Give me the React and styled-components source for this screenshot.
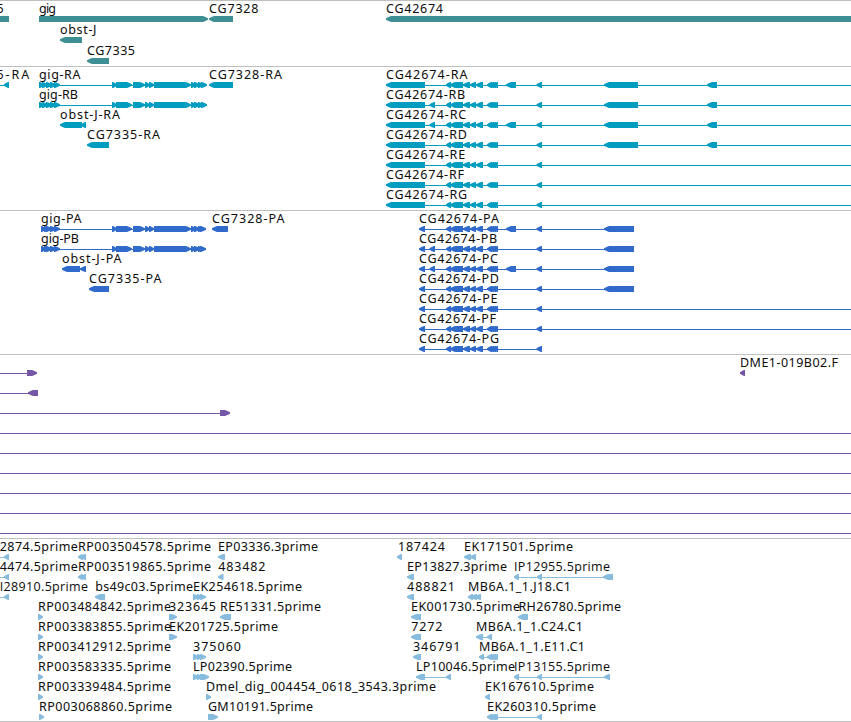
import styled, { createGlobalStyle } from "styled-components";

const WIDTH = 851;
const HEAD = 5;

// label: [text, left, right], feature: [start, end, direction], line: [from, to]
const gigExons = (start, end) => [
  [start, start + 5, 1],
  [start + 3, start + 9, 1],
  [46, 52, 1],
  [50, 56, 1],
  [54, 60, 1],
  [112, 117, 1],
  [116, 132, 1],
  [133, 145, 1],
  [145, 150, 1],
  [149, 154, 1],
  [154, 191, 1],
  [191, 196, 1],
  [194, 200, 1],
  [198, 204, 1],
  [end - 6, end, 1],
];

const cgExons = [
  [446, 451, -1],
  [450, 463, -1],
  [463, 470, -1],
  [470, 476, -1],
  [476, 483, -1],
  [487, 492, -1],
  [489, 494, -1],
  [491, 496, -1],
  [493, 498, -1],
  [536.5, 542, -1],
];

const extraExons = {
  A: [[506, 516, -1]],
  B: [[429.5, 435, -1]],
  C: [[429.5, 435, -1], [506, 516, -1]],
};

const cgTranscript = (id, right) => ({
  label: [`CG42674-R${id}`, 386.5, right],
  line: [386, WIDTH],
  features: [
    [386, 425, -1],
    ...cgExons,
    ...(extraExons[id] || []),
    ...("ABCD".includes(id) ? [[604, 638, -1], [707, 717, -1]] : []),
  ],
});

const cgProtein = (id, right, lineEnd) => ({
  label: [`CG42674-P${id}`, 419.5, right],
  line: [419, lineEnd],
  features: [
    [419, 425, -1],
    ...cgExons,
    ...(extraExons[id] || []),
    ...("ABCD".includes(id) ? [[604, 634, -1]] : []),
  ],
});

const item = (text, left, right, features = [], line) => ({
  label: [text, left, right],
  features,
  line,
});

const genes = [
  [
    item("5", -3, 3.2, [[-20, 9, 0]]),
    item("gig", 39.5, 55.5, [[39, 208, 1]]),
    item("CG7328", 209.5, 258, [[209, 233, -1]]),
    item("CG42674", 386.5, 442.5, [[386, 860, -1]]),
  ],
  [item("obst-J", 60.5, 96, [[60, 82, -1]])],
  [item("CG7335", 87.5, 134.5, [[87, 109, -1]])],
];

const transcripts = [
  [
    item("5-RA", -3, 28.8, [[4, 9, -1]], [0, 9]),
    item("gig-RA", 39.5, 80, gigExons(39, 207), [39, 207]),
    item("CG7328-RA", 209.5, 281.5, [[209, 233, -1]]),
    cgTranscript("A", 467),
  ],
  [
    item("gig-RB", 39.5, 77.5, gigExons(39, 207), [39, 207]),
    cgTranscript("B", 464.7),
  ],
  [
    item("obst-J-RA", 60.5, 119.5, [[60, 82, -1], [81, 86, -1]]),
    cgTranscript("C", 465.7),
  ],
  [
    item("CG7335-RA", 87.5, 159.5, [[87, 109, -1]]),
    cgTranscript("D", 466.5),
  ],
  [cgTranscript("E", 464.7)],
  [cgTranscript("F", 463.5)],
  [cgTranscript("G", 466.7)],
];

const proteins = [
  [
    item("gig-PA", 41.5, 81, gigExons(41, 206), [41, 206]),
    item("CG7328-PA", 212.5, 284, [[212, 228, -1]]),
    cgProtein("A", 498.5, 634),
  ],
  [
    item("gig-PB", 41.5, 78.5, gigExons(41, 206), [41, 206]),
    cgProtein("B", 496.7, 634),
  ],
  [
    item("obst-J-PA", 62.5, 121, [[62, 80, -1], [80, 86, -1]], [62, 86]),
    cgProtein("C", 497.5, 634),
  ],
  [
    item("CG7335-PA", 89.5, 161, [[89, 109, -1]]),
    cgProtein("D", 498.5, 634),
  ],
  [cgProtein("E", 497, WIDTH)],
  [cgProtein("F", 495.5, WIDTH)],
  [cgProtein("G", 498.5, 542)],
];

const fullLine = [{ features: [], line: [0, WIDTH] }];

const clones = [
  [
    { features: [[27, 37, 1]], line: [0, 30] },
    item("DME1-019B02.F", 740.5, 837.5, [[740, 745, -1]]),
  ],
  [{ features: [[28, 38, -1]], line: [0, 30] }],
  [{ features: [[220, 230, 1]], line: [0, 222] }],
  fullLine,
  fullLine,
  fullLine,
  fullLine,
  fullLine,
  fullLine,
];

const insertions = [
  [
    item("2874.5prime", 0.3, 77.3, [[4, 9, -1]], [0, 9]),
    item("RP003504578.5prime", 78.5, 210.5, [[78, 83, -1], [81, 86, -1]]),
    item("EP03336.3prime", 218.5, 317.5, [[218, 225, -1]]),
    item("187424", 398.5, 444.3, [[397, 402, -1]]),
    item("EK171501.5prime", 464.5, 572.5, [[464, 471, -1], [470, 476, -1]]),
  ],
  [
    item("4474.5prime", 0.3, 77.3, [[4, 9, -1]], [0, 9]),
    item("RP003519865.5prime", 78.5, 210.5, [[78, 83, -1], [81, 86, -1]]),
    item("483482", 218.7, 265, [[218, 223.5, -1]]),
    item("EP13827.3prime", 407.5, 506.5, [[407, 414, -1]]),
    item(
      "IP12955.5prime",
      514.5,
      609.5,
      [[514, 519, -1], [537, 542, -1], [603, 613, -1]],
      [514, 613]
    ),
  ],
  [
    item("I28910.5prime", 0.2, 87.5, [[4, 9, -1]], [0, 9]),
    item("bs49c03.5prime", 95.7, 192.5, [[95, 105, -1]]),
    item("EK254618.5prime", 193.5, 301.5, [[193, 199, 1], [197, 202, 1], [200, 206, 1]]),
    item("488821", 407.5, 454.5, [[407, 414, -1]]),
    item("MB6A.1_1.J18.C1", 468.5, 570.5, [[468, 473, -1], [471, 477, -1], [475, 481, -1]]),
  ],
  [
    item("RP003484842.5prime", 38.5, 170.5, [[38, 43, 1]]),
    item("323645", 169.5, 215.5, [[169, 177, 1]]),
    item("RE51331.5prime", 220.5, 320.5, [[220, 231, -1]]),
    item("EK001730.5prime", 411.5, 519.5, [[411, 421, -1]]),
    item("RH26780.5prime", 519, 620.5, [[518, 528, -1]]),
  ],
  [
    item("RP003383855.5prime", 38.5, 170.5, [[38, 43, 1]]),
    item("EK201725.5prime", 169.5, 277.5, [[169, 177, 1]]),
    item("7272", 411.8, 441.8, [[411, 421, -1]]),
    item("MB6A.1_1.C24.C1", 476.5, 582.5, [[476, 483, -1], [487, 492, -1]], [476, 492]),
  ],
  [
    item("RP003412912.5prime", 38.5, 170.5, [[38, 43, 1]]),
    item("375060", 193.5, 240.5, [[193, 199, 1], [197, 202, 1], [200, 206, 1]]),
    item("346791", 413.5, 460, [[413, 421, -1]]),
    item(
      "MB6A.1_1.E11.C1",
      479.5,
      584.5,
      [[479, 484, -1], [487, 492, -1], [489, 494, -1], [491, 496, -1], [493, 498, -1]],
      [479, 498]
    ),
  ],
  [
    item("RP003583335.5prime", 38.5, 170.5, [[38, 43, 1]]),
    item("LP02390.5prime", 193.5, 291.5, [[193, 199, 1], [197, 202, 1], [200, 209, 1]]),
    item("LP10046.5prime", 416.5, 514.5, [[416, 425, -1], [446, 451, -1]], [416, 451]),
    item(
      "IP13155.5prime",
      514.5,
      609.5,
      [[514, 519, -1], [537, 542, -1], [604, 610, -1]],
      [514, 610]
    ),
  ],
  [
    item("RP003339484.5prime", 38.5, 170.5, [[38, 43, 1]]),
    item("Dmel_dig_004454_0618_3543.3prime", 206.5, 435.5, [[206, 211, 1]]),
    item("EK167610.5prime", 485.5, 593.5, [[485, 490, -1]]),
  ],
  [
    item("RP003068860.5prime", 39.5, 171.5, [[39, 44, 1]]),
    item("GM10191.5prime", 208.5, 312.5, [[208, 218, 1]]),
    item(
      "EK260310.5prime",
      487.5,
      595.5,
      [[487, 492, -1], [489, 494, -1], [491, 496, -1], [493, 498, -1], [537, 542, -1]],
      [487, 542]
    ),
  ],
];

const tracks = [
  { name: "genes", color: "#3d8f93", rowHeight: 21, gap: 2, rows: genes },
  { name: "transcripts", color: "#009dc0", rowHeight: 20, gap: 3, rows: transcripts },
  { name: "proteins", color: "#306bcb", rowHeight: 20, gap: 3, rows: proteins },
  { name: "clones", color: "#7457a7", rowHeight: 20, gap: 3, rows: clones },
  { name: "insertions", color: "#87bcde", rowHeight: 20, gap: 2, rows: insertions },
];

const featurePoints = ([start, end, dir]) => {
  if (dir === 0) {
    return `${start},15 ${end},15 ${end},21 ${start},21`;
  }
  const head = Math.min(HEAD, end - start - 1);
  const tip = dir === 1 ? end : start;
  const tail = dir === 1 ? start : end;
  const neck = tip - dir * head;
  const cheek = tip - dir * head * 0.5;
  return `${tail},15 ${neck},15 ${cheek},16 ${tip},17.3 ${tip},18.7 ${cheek},20 ${neck},21 ${tail},21`;
};

const Feature = ({ label, line, features }) => (
  <g>
    {line && <Intron x={line[0]} y="18" width={line[1] - line[0]} height="1" />}
    {features.map((feature, i) => (
      <Exon key={i} points={featurePoints(feature)} />
    ))}
    {label && (
      <Label
        x={label[1] - 0.5}
        y="12"
        textLength={label[2] - label[1] + 1}
        $plainI={label[0].includes("I")}
      >
        {label[0]}
      </Label>
    )}
  </g>
);

const App = () => {
  return (
    <>
      <GlobalStyle />
      <Browser>
        {tracks.map((track) => (
          <Track key={track.name} $color={track.color} $gap={track.gap}>
            {track.rows.map((row, i) => (
              <Row key={i} $height={track.rowHeight}>
                {row.map((entry, j) => (
                  <Feature key={j} {...entry} />
                ))}
              </Row>
            ))}
          </Track>
        ))}
      </Browser>
    </>
  );
};

export default App;

const GlobalStyle = createGlobalStyle`
  body {
    margin: 0;
    background-color: white;
    overflow: hidden;
  }
`;

const Browser = styled.main`
  display: flex;
  flex-direction: column;
  width: 851px;
  height: 722px;
  box-sizing: border-box;
  border-bottom: 1px solid #bfbfbf;
  overflow: hidden;
`;

const Track = styled.section`
  display: flex;
  flex-direction: column;
  flex-shrink: 0;
  border-top: 1px solid #bfbfbf;
  padding-bottom: ${(props) => props.$gap}px;
  color: ${(props) => props.$color};
`;

const Row = styled.svg`
  display: block;
  width: 100%;
  height: ${(props) => props.$height}px;
  overflow: visible;
`;

const Intron = styled.rect`
  fill: currentColor;
  shape-rendering: crispEdges;
`;

const Exon = styled.polygon`
  fill: currentColor;
`;

/* Noto Sans draws the capital I with serifs, Open Sans does not */
const Label = styled.text`
  fill: #0c0c0c;
  font-family: ${(props) => (props.$plainI ? '"Open Sans"' : '"Noto Sans"')}, sans-serif;
  font-size: 12.5px;
`;
